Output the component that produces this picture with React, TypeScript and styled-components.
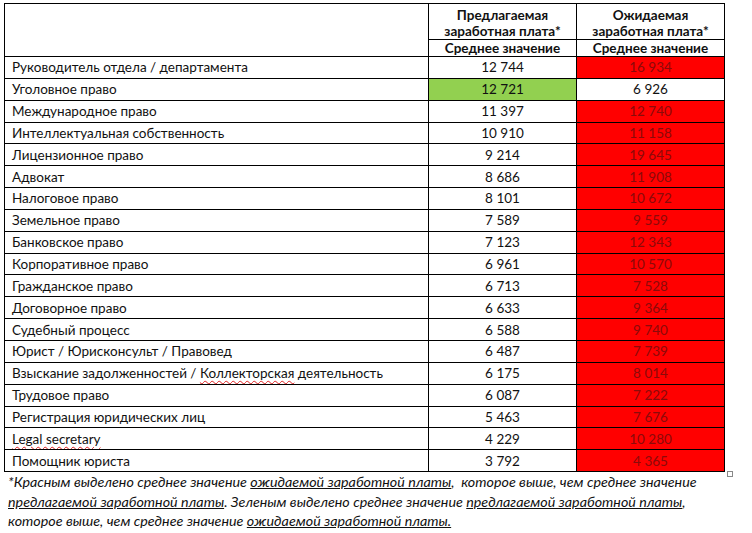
import React from "react";
import styled, { createGlobalStyle } from "styled-components";

const Global = createGlobalStyle`
  html, body { margin: 0; padding: 0; background: #fff; }
  body { font-family: Lato, "Open Sans", sans-serif; color: #111; }
`;

const Page = styled.div`
  padding: 3px 0 0 4px;
  width: 752px;
  height: 533px;
  box-sizing: border-box;
  overflow: hidden;
`;

const TableWrap = styled.div`
  position: relative;
  width: 721px;
`;

const ResizeHandle = styled.span`
  position: absolute;
  right: -8px;
  bottom: -5px;
  width: 4px;
  height: 4px;
  border: 1px solid #888;
  background: #fff;
`;

const Table = styled.table`
  border-collapse: collapse;
  table-layout: fixed;
  width: 721px;
  font-size: 13.5px;
`;

const HeadCell = styled.th<{ $tall?: boolean }>`
  border: 1px solid #000;
  padding: 0;
  font-weight: bold;
  font-size: 13.5px;
  text-align: center;
  line-height: 16px;
  height: ${(p) => (p.$tall ? "36px" : "16px")};
  vertical-align: ${(p) => (p.$tall ? "top" : "middle")};
  padding-top: ${(p) => (p.$tall ? "3px" : "0")};
  box-sizing: border-box;
`;

const Cell = styled.td<{ $fill?: "red" | "green"; $num?: boolean }>`
  border: 1px solid #000;
  height: 20.85px;
  padding: 0 0 0 ${(p) => (p.$num ? "0" : "7px")};
  text-align: ${(p) => (p.$num ? "center" : "left")};
  background: ${(p) =>
    p.$fill === "red" ? "#ff0000" : p.$fill === "green" ? "#92d050" : "#fff"};
  color: ${(p) => (p.$fill === "red" ? "#8b0a0a" : "#111")};
  white-space: nowrap;
  overflow: hidden;
`;

const Squiggle = styled.span`
  text-decoration: underline wavy #e02020;
  text-decoration-thickness: 1px;
  text-underline-offset: 2px;
`;

const Note = styled.p`
  margin: 0 0 0 4px;
  font-style: italic;
  font-size: 14.3px;
  line-height: 19.5px;
  white-space: nowrap;
`;

const U = styled.span`
  text-decoration: underline;
`;

type Row = { name: React.ReactNode; offered: string; expected: string; green?: boolean };

const rows: Row[] = [
  { name: "Руководитель отдела / департамента", offered: "12 744", expected: "16 934" },
  { name: "Уголовное право", offered: "12 721", expected: "6 926", green: true },
  { name: "Международное право", offered: "11 397", expected: "12 740" },
  { name: "Интеллектуальная собственность", offered: "10 910", expected: "11 158" },
  { name: "Лицензионное право", offered: "9 214", expected: "19 645" },
  { name: "Адвокат", offered: "8 686", expected: "11 908" },
  { name: "Налоговое право", offered: "8 101", expected: "10 672" },
  { name: "Земельное право", offered: "7 589", expected: "9 559" },
  { name: "Банковское право", offered: "7 123", expected: "12 343" },
  { name: "Корпоративное право", offered: "6 961", expected: "10 570" },
  { name: "Гражданское право", offered: "6 713", expected: "7 528" },
  { name: "Договорное право", offered: "6 633", expected: "9 364" },
  { name: "Судебный процесс", offered: "6 588", expected: "9 740" },
  { name: "Юрист / Юрисконсульт / Правовед", offered: "6 487", expected: "7 739" },
  {
    name: (
      <>
        Взыскание задолженностей / <Squiggle>Коллекторская</Squiggle> деятельность
      </>
    ),
    offered: "6 175",
    expected: "8 014",
  },
  { name: "Трудовое право", offered: "6 087", expected: "7 222" },
  { name: "Регистрация юридических лиц", offered: "5 463", expected: "7 676" },
  { name: <Squiggle>Legal secretary</Squiggle>, offered: "4 229", expected: "10 280" },
  { name: "Помощник юриста", offered: "3 792", expected: "4 365" },
];

export default function App() {
  return (
    <Page>
      <Global />
      <TableWrap>
        <Table>
          <colgroup>
            <col style={{ width: 424 }} />
            <col style={{ width: 148 }} />
            <col style={{ width: 148 }} />
          </colgroup>
          <thead>
            <tr>
              <HeadCell rowSpan={2} />
              <HeadCell $tall>
                Предлагаемая
                <br />
                заработная плата*
              </HeadCell>
              <HeadCell $tall>
                Ожидаемая
                <br />
                заработная плата*
              </HeadCell>
            </tr>
            <tr>
              <HeadCell>Среднее значение</HeadCell>
              <HeadCell>Среднее значение</HeadCell>
            </tr>
          </thead>
          <tbody>
            {rows.map((r, i) => (
              <tr key={i}>
                <Cell>{r.name}</Cell>
                <Cell $num $fill={r.green ? "green" : undefined}>
                  {r.offered}
                </Cell>
                <Cell $num $fill={r.green ? undefined : "red"}>
                  {r.expected}
                </Cell>
              </tr>
            ))}
          </tbody>
        </Table>
        <ResizeHandle />
      </TableWrap>
      <Note>
        *Красным выделено среднее значение <U>ожидаемой заработной платы</U>,&nbsp; которое выше, чем
        среднее значение
        <br />
        <U>предлагаемой заработной платы</U>. Зеленым выделено среднее значение{" "}
        <U>предлагаемой заработной платы</U>,
        <br />
        которое выше, чем среднее значение <U>ожидаемой заработной платы.</U>
      </Note>
    </Page>
  );
}
